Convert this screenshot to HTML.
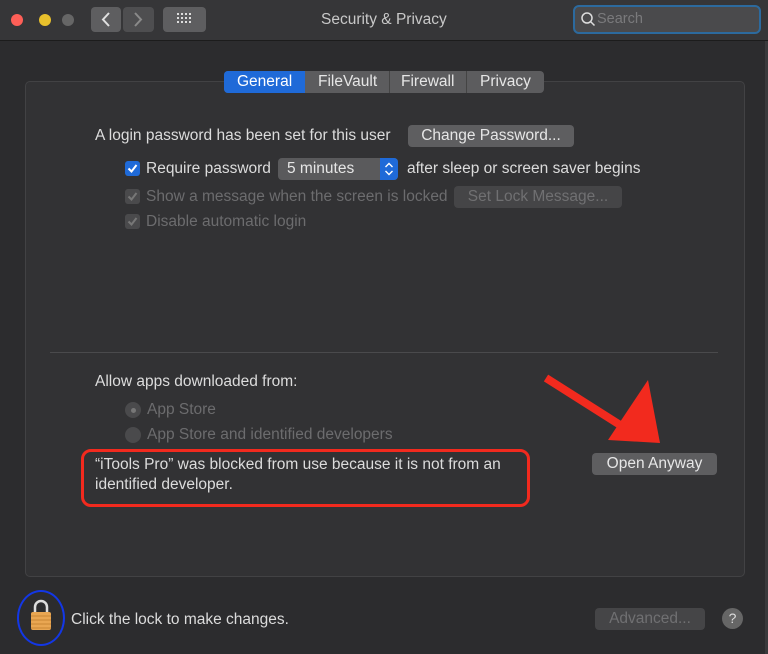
<!DOCTYPE html>
<html><head><style>
body{margin:0;width:768px;height:654px;background:#2c2c2e;font-family:"Liberation Sans",sans-serif;color:#dcdcdc;position:relative;overflow:hidden;font-size:15.5px}
.a{position:absolute;white-space:nowrap}
.btn{position:absolute;background:#5e5e60;border-radius:4px;color:#e6e6e6;text-align:center;font-size:15.5px}
.dis{color:#6c6c6e}
</style></head><body>
<div class="a" style="left:0;top:0;width:768px;height:40px;background:#363638;border-bottom:1px solid #1c1c1c"></div>
<div class="a" style="left:765px;top:41px;width:3px;height:613px;background:#3a3a3c"></div>
<div class="a" style="left:11px;top:14px;width:12px;height:12px;border-radius:50%;background:#fe5f57"></div>
<div class="a" style="left:39px;top:14px;width:12px;height:12px;border-radius:50%;background:#e8c02c"></div>
<div class="a" style="left:62px;top:14px;width:12px;height:12px;border-radius:50%;background:#666"></div>
<div class="btn" style="left:91px;top:7px;width:30px;height:25px"></div>
<div class="btn" style="left:123px;top:7px;width:31px;height:25px;background:#4e4e50"></div>
<svg class="a" style="left:91px;top:7px" width="63" height="25"><path d="M18 6l-6 6.5 6 6.5" stroke="#e0e0e0" stroke-width="2" fill="none"/><path d="M44 6l6 6.5-6 6.5" stroke="#8a8a8a" stroke-width="2" fill="none"/></svg>
<div class="btn" style="left:163px;top:7px;width:43px;height:25px"></div>
<svg class="a" style="left:177px;top:13px" width="14" height="12"><g fill="#ddd"><rect x="0" y="0" width="2" height="2"/><rect x="4" y="0" width="2" height="2"/><rect x="8" y="0" width="2" height="2"/><rect x="12" y="0" width="2" height="2"/><rect x="0" y="4" width="2" height="2"/><rect x="4" y="4" width="2" height="2"/><rect x="8" y="4" width="2" height="2"/><rect x="12" y="4" width="2" height="2"/><rect x="0" y="8" width="2" height="2"/><rect x="4" y="8" width="2" height="2"/><rect x="8" y="8" width="2" height="2"/><rect x="12" y="8" width="2" height="2"/></g></svg>
<div class="a" style="left:321px;top:11px;font-size:15.5px;color:#c8c8c8">Security &amp; Privacy</div>
<div class="a" style="left:573px;top:5px;width:184px;height:25px;border:2px solid #2c6a9e;border-radius:6px;background:#4a4a4c"></div>
<svg class="a" style="left:580px;top:11px" width="16" height="16"><circle cx="7" cy="7" r="5" stroke="#ddd" stroke-width="1.5" fill="none"/><path d="M10.5 10.5l4 4" stroke="#ddd" stroke-width="1.5"/></svg>
<div class="a" style="left:597px;top:11px;color:#7a7a7c;font-size:14.5px">Search</div>

<div class="a" style="left:25px;top:81px;width:718px;height:494px;background:#323234;border:1px solid #424244;border-radius:5px"></div>
<div class="a" style="left:224px;top:71px;width:320px;height:22px;background:#5c5c5e;border-radius:4px"></div>
<div class="a" style="left:224px;top:71px;width:81px;height:22px;background:#1f6ad8;border-radius:4px 0 0 4px"></div>
<div class="a" style="left:237px;top:73px;color:#fff;font-size:15.5px">General</div>
<div class="a" style="left:318px;top:73px;color:#e6e6e6">FileVault</div>
<div class="a" style="left:389px;top:71px;width:1px;height:22px;background:#444"></div>
<div class="a" style="left:401px;top:73px;color:#e6e6e6">Firewall</div>
<div class="a" style="left:466px;top:71px;width:1px;height:22px;background:#444"></div>
<div class="a" style="left:480px;top:73px;color:#e6e6e6">Privacy</div>

<div class="a" style="left:95px;top:127px">A login password has been set for this user</div>
<div class="btn" style="left:408px;top:125px;width:166px;height:22px;line-height:22px">Change Password...</div>
<div class="a" style="left:125px;top:161px;width:15px;height:15px;background:#1f6ad8;border-radius:3px"></div>
<svg class="a" style="left:125px;top:161px" width="15" height="15"><path d="M3.5 7.5l3 3 5-6.5" stroke="#fff" stroke-width="2" fill="none"/></svg>
<div class="a" style="left:146px;top:160px">Require password</div>
<div class="btn" style="left:278px;top:158px;width:120px;height:22px;line-height:22px;text-align:left;text-indent:9px;background:#5a5a5c">5 minutes</div>
<div class="a" style="left:380px;top:158px;width:18px;height:22px;background:#1f6ad8;border-radius:0 4px 4px 0"></div>
<svg class="a" style="left:380px;top:158px" width="18" height="22"><path d="M5.5 9l3.5-3.5 3.5 3.5M5.5 13l3.5 3.5 3.5-3.5" stroke="#fff" stroke-width="1.4" fill="none"/></svg>
<div class="a" style="left:407px;top:160px">after sleep or screen saver begins</div>
<div class="a" style="left:125px;top:189px;width:15px;height:15px;background:#4a4a4c;border-radius:3px"></div>
<svg class="a" style="left:125px;top:189px" width="15" height="15"><path d="M3.5 7.5l3 3 5-6.5" stroke="#777" stroke-width="2" fill="none"/></svg>
<div class="a dis" style="left:146px;top:188px">Show a message when the screen is locked</div>
<div class="btn" style="left:454px;top:186px;width:168px;height:22px;line-height:22px;background:#454547;color:#707072">Set Lock Message...</div>
<div class="a" style="left:125px;top:214px;width:15px;height:15px;background:#4a4a4c;border-radius:3px"></div>
<svg class="a" style="left:125px;top:214px" width="15" height="15"><path d="M3.5 7.5l3 3 5-6.5" stroke="#777" stroke-width="2" fill="none"/></svg>
<div class="a dis" style="left:146px;top:213px">Disable automatic login</div>

<div class="a" style="left:50px;top:352px;width:668px;height:1px;background:#4a4a4c"></div>
<div class="a" style="left:95px;top:373px">Allow apps downloaded from:</div>
<div class="a" style="left:125px;top:402px;width:16px;height:16px;border-radius:50%;background:#4a4a4c"></div>
<div class="a" style="left:131px;top:408px;width:5px;height:5px;border-radius:50%;background:#777"></div>
<div class="a dis" style="left:147px;top:401px">App Store</div>
<div class="a" style="left:125px;top:427px;width:16px;height:16px;border-radius:50%;background:#4a4a4c"></div>
<div class="a dis" style="left:147px;top:426px">App Store and identified developers</div>
<div class="a" style="left:95px;top:455px;line-height:20px">“iTools Pro” was blocked from use because it is not from an<br>identified developer.</div>
<div class="a" style="left:81px;top:449px;width:443px;height:52px;border:3px solid #f22a1e;border-radius:10px"></div>
<div class="btn" style="left:592px;top:453px;width:125px;height:22px;line-height:22px">Open Anyway</div>
<svg class="a" style="left:540px;top:370px" width="130" height="80"><path d="M6 8l82 52" stroke="#f22a1e" stroke-width="8"/><path d="M68 70l40-60 12 63z" fill="#f22a1e"/></svg>

<div class="a" style="left:17px;top:590px;width:44px;height:52px;border:2px solid #1337e6;border-radius:50%"></div>
<svg class="a" style="left:27px;top:597px" width="28" height="36"><path d="M8 16V10a6 6 0 0 1 12 0v6" stroke="#ddd" stroke-width="2.5" fill="none"/><rect x="4" y="15" width="20" height="18" rx="2" fill="#e9a652"/><g stroke="#c98534" stroke-width="1"><path d="M4 19h20M4 23h20M4 27h20M4 31h20"/></g></svg>
<div class="a" style="left:71px;top:611px">Click the lock to make changes.</div>
<div class="btn" style="left:595px;top:608px;width:110px;height:22px;line-height:22px;background:#454547;color:#707072">Advanced...</div>
<div class="a" style="left:722px;top:608px;width:21px;height:21px;border-radius:50%;background:#666;color:#ddd;text-align:center;line-height:21px;font-size:14px">?</div>
</body></html>
